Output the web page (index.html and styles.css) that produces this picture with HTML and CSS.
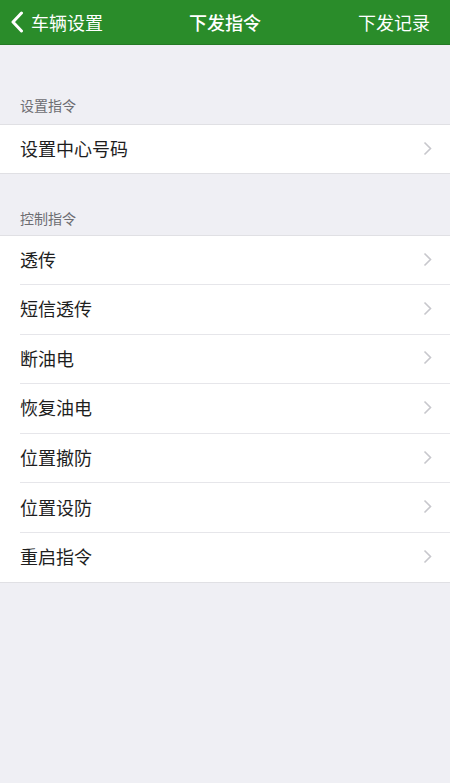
FILE: index.html
```html
<!DOCTYPE html>
<html lang="zh">
<head>
<meta charset="utf-8">
<link rel="stylesheet" href="styles.css">
</head>
<body>
<div class="nav">
  <div class="nav-left">
    <svg class="back" width="14" height="22" viewBox="0 0 14 22"><path d="M11.5 2 L3 11 L11.5 20" fill="none" stroke="#fff" stroke-width="3" stroke-linecap="round" stroke-linejoin="round"/></svg>
    <span>车辆设置</span>
  </div>
  <div class="nav-title">下发指令</div>
  <div class="nav-right">下发记录</div>
</div>

<div class="sec-head first">设置指令</div>
<div class="group">
  <div class="row"><span>设置中心号码</span><svg class="chev" width="9" height="15" viewBox="0 0 9 15"><path d="M1.5 1.5 L7.5 7.5 L1.5 13.5" fill="none" stroke="#c7c7cc" stroke-width="1.6"/></svg></div>
</div>

<div class="sec-head second">控制指令</div>
<div class="group">
  <div class="row"><span>透传</span><svg class="chev" width="9" height="15" viewBox="0 0 9 15"><path d="M1.5 1.5 L7.5 7.5 L1.5 13.5" fill="none" stroke="#c7c7cc" stroke-width="1.6"/></svg></div>
  <div class="row"><span>短信透传</span><svg class="chev" width="9" height="15" viewBox="0 0 9 15"><path d="M1.5 1.5 L7.5 7.5 L1.5 13.5" fill="none" stroke="#c7c7cc" stroke-width="1.6"/></svg></div>
  <div class="row"><span>断油电</span><svg class="chev" width="9" height="15" viewBox="0 0 9 15"><path d="M1.5 1.5 L7.5 7.5 L1.5 13.5" fill="none" stroke="#c7c7cc" stroke-width="1.6"/></svg></div>
  <div class="row"><span>恢复油电</span><svg class="chev" width="9" height="15" viewBox="0 0 9 15"><path d="M1.5 1.5 L7.5 7.5 L1.5 13.5" fill="none" stroke="#c7c7cc" stroke-width="1.6"/></svg></div>
  <div class="row"><span>位置撤防</span><svg class="chev" width="9" height="15" viewBox="0 0 9 15"><path d="M1.5 1.5 L7.5 7.5 L1.5 13.5" fill="none" stroke="#c7c7cc" stroke-width="1.6"/></svg></div>
  <div class="row"><span>位置设防</span><svg class="chev" width="9" height="15" viewBox="0 0 9 15"><path d="M1.5 1.5 L7.5 7.5 L1.5 13.5" fill="none" stroke="#c7c7cc" stroke-width="1.6"/></svg></div>
  <div class="row"><span>重启指令</span><svg class="chev" width="9" height="15" viewBox="0 0 9 15"><path d="M1.5 1.5 L7.5 7.5 L1.5 13.5" fill="none" stroke="#c7c7cc" stroke-width="1.6"/></svg></div>
</div>
</body>
</html>
```

FILE: styles.css
```css
html, body {
  margin: 0;
  padding: 0;
}
body {
  width: 450px;
  height: 783px;
  background: #efeff4;
  font-family: "Noto Sans CJK SC", "Noto Sans", sans-serif;
  overflow: hidden;
}
.nav {
  height: 45px;
  background: #2a8c2a;
  border-bottom: 1px solid #257a25;
  box-sizing: border-box;
  display: flex;
  align-items: center;
  justify-content: space-between;
  padding: 0 20px 0 10px;
  position: relative;
  color: #fff;
  font-size: 18px;
}
.nav-left {
  display: flex;
  align-items: center;
  gap: 7px;
}
.nav-left span {
  line-height: 1;
}
.back {
  display: block;
}
.nav-title {
  position: absolute;
  left: 0;
  right: 0;
  text-align: center;
  font-weight: 500;
  pointer-events: none;
}
.nav-right {
  line-height: 1;
}
.sec-head {
  display: flex;
  align-items: flex-end;
  padding: 0 0 10px 20px;
  box-sizing: border-box;
  font-size: 14px;
  color: #6d6d72;
  line-height: 1;
}
.sec-head.first {
  height: 79px;
  padding-bottom: 12px;
}
.sec-head.second {
  height: 61px;
  padding-bottom: 10px;
}
.group {
  background: #fff;
  border-top: 1px solid #e0e0e4;
  border-bottom: 1px solid #e0e0e4;
}
.row {
  height: 49px;
  display: flex;
  align-items: center;
  justify-content: space-between;
  margin-left: 20px;
  padding-right: 18px;
  padding-bottom: 2px;
  font-size: 18px;
  color: #1e1e1e;
  border-top: 1px solid #e6e6ea;
  box-sizing: border-box;
}
.row:first-child {
  border-top: none;
  height: 48px;
}
.group .row + .row {
  height: 49.6px;
}
.chev {
  display: block;
}
```
